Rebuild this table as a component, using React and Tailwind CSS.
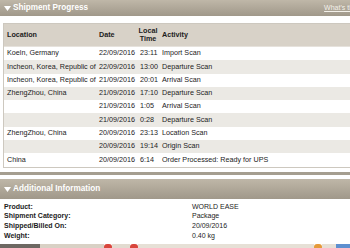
const rows = [
  { loc: "Koeln, Germany", date: "22/09/2016", time: "23:11", act: "Import Scan" },
  { loc: "Incheon, Korea, Republic of", date: "22/09/2016", time: "13:00", act: "Departure Scan" },
  { loc: "Incheon, Korea, Republic of", date: "21/09/2016", time: "20:01", act: "Arrival Scan" },
  { loc: "ZhengZhou, China", date: "21/09/2016", time: "17:10", act: "Departure Scan" },
  { loc: "", date: "21/09/2016", time: "1:05", act: "Arrival Scan" },
  { loc: "", date: "21/09/2016", time: "0:28", act: "Departure Scan" },
  { loc: "ZhengZhou, China", date: "20/09/2016", time: "23:13", act: "Location Scan" },
  { loc: "", date: "20/09/2016", time: "19:14", act: "Origin Scan" },
  { loc: "China", date: "20/09/2016", time: "6:14", act: "Order Processed: Ready for UPS" },
];

const details = [
  ["Product:", "WORLD EASE"],
  ["Shipment Category:", "Package"],
  ["Shipped/Billed On:", "20/09/2016"],
  ["Weight:", "0.40 kg"],
];

const SectionBar = ({ title, children, className = "" }) => (
  <div className={`flex items-center justify-between bg-gradient-to-b from-[#bfb7a8] to-[#a0988a] pl-[4px] pr-[5px] text-white ${className}`}>
    <div className="flex items-center gap-[2px] text-[8.2px] font-bold leading-none">
      <svg width="7" height="5" viewBox="0 0 7 5" className="mt-[1px]">
        <path d="M0 0h7L3.5 5z" fill="#ffffff" />
      </svg>
      <span>{title}</span>
    </div>
    {children}
  </div>
);

export default function App() {
  return (
    <div className="w-[350px] h-[248px] overflow-hidden bg-white font-['Liberation_Sans',Arial,sans-serif] text-[#1c1c1c]">
      <div className="w-[367px]">
        {/* Shipment Progress */}
        <SectionBar title="Shipment Progress" className="h-[16px]">
          <a className="text-[7px] underline text-[#f4f1ea] whitespace-nowrap">What's this?</a>
        </SectionBar>

        <div className="ml-[3px] mt-[7px] border border-[#cdc8bf] text-[7.2px]">
          <div className="grid grid-cols-[92px_41px_22px_1fr] h-[23px] items-center bg-[#d8d2c8] border-b border-[#e6e2dc] font-bold">
            <div className="pl-[3px]">Location</div>
            <div className="pl-[3px]">Date</div>
            <div className="text-center leading-[8px]">Local<br />Time</div>
            <div className="pl-[3px]">Activity</div>
          </div>
          {rows.map((r, i) => (
            <div
              key={i}
              className={`grid grid-cols-[92px_41px_22px_1fr] h-[13.3px] items-center whitespace-nowrap ${i % 2 ? "bg-[#ebe9e4]" : "bg-white"}`}
            >
              <div className="pl-[3px]">{r.loc}</div>
              <div className="pl-[3px]">{r.date}</div>
              <div className="pl-[3px]">{r.time}</div>
              <div className="pl-[3px]">{r.act}</div>
            </div>
          ))}
        </div>

        <div className="mt-[4px] h-[3px] bg-[#a59e90]"></div>

        {/* Additional Information */}
        <SectionBar title="Additional Information" className="mt-[4px] h-[20px]" />

        <div className="pt-[3px] pl-[4px] text-[7px] leading-[9.7px]">
          {details.map(([k, v]) => (
            <div key={k} className="grid grid-cols-[188px_1fr]">
              <div className="font-bold">{k}</div>
              <div>{v}</div>
            </div>
          ))}
        </div>

        <div className="mt-[4px] flex h-[6px]">
          <div className="w-[40px] bg-[#6d6862]"></div>
          <div className="w-[64px] bg-[#d9d1c5]"></div>
          <div className="w-[8px] rounded-full bg-[#d8463c]"></div>
          <div className="w-[18px] bg-[#e2dbd0]"></div>
          <div className="w-[8px] rounded-full bg-[#d8463c]"></div>
          <div className="w-[176px] bg-[#e6e0d6]"></div>
          <div className="w-[8px] rounded-full bg-[#e59a3a]"></div>
          <div className="w-[14px] bg-[#e6e0d6]"></div>
          <div className="w-[14px] bg-[#5d8fcf]"></div>
          <div className="flex-1 bg-[#e6e0d6]"></div>
        </div>
      </div>
    </div>
  );
}
